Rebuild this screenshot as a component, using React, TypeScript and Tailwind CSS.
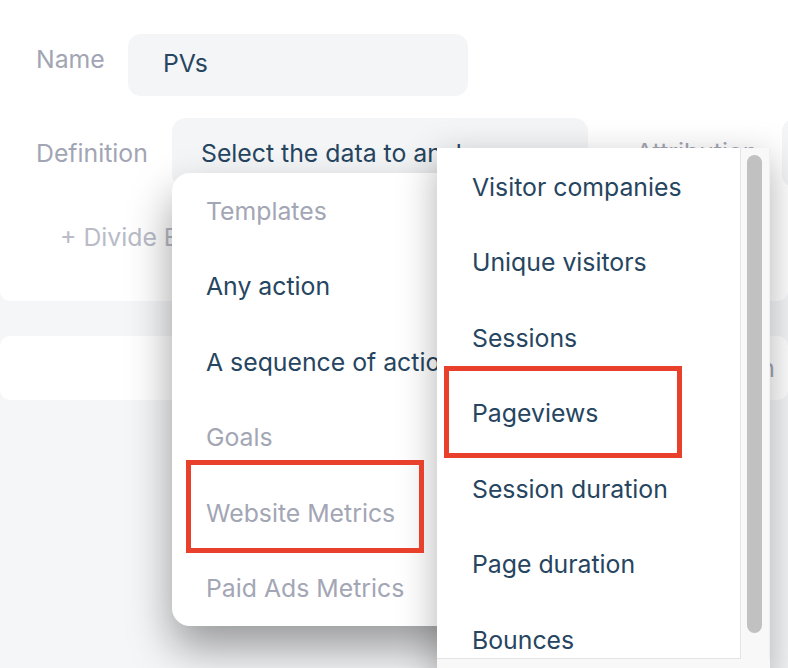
import React from 'react';
import { ChevronDown } from 'lucide-react';

const leftItems = [
  { label: 'Templates', muted: true },
  { label: 'Any action', muted: false },
  { label: 'A sequence of actions', muted: false },
  { label: 'Goals', muted: true },
  { label: 'Website Metrics', muted: true },
  { label: 'Paid Ads Metrics', muted: true },
];

const metricItems = [
  'Visitor companies',
  'Unique visitors',
  'Sessions',
  'Pageviews',
  'Session duration',
  'Page duration',
  'Bounces',
];

const App: React.FC = () => {
  return (
    <div
      className="relative w-[788px] h-[668px] overflow-hidden bg-[#f5f6f8] text-[24.8px] leading-[32px]"
      style={{ fontFamily: 'Inter, "Noto Sans", sans-serif' }}
    >
      {/* Metric form card */}
      <div className="w-[788px] h-[301px] bg-white rounded-b-[10px] pl-[36px] overflow-hidden">
        <div className="flex items-start pt-[34px]">
          <div className="w-[92px] shrink-0 pt-[9px] text-[#a2a5b4]">Name</div>
          <div className="w-[340px] h-[62px] shrink-0 rounded-[13px] bg-[#f4f5f7] pl-[35px] pt-[13px] text-[#264560]">
            PVs
          </div>
        </div>

        <div className="flex items-start mt-[22px]">
          <div className="w-[136px] shrink-0 pt-[19px] text-[#a2a5b4]">Definition</div>
          <div className="w-[416px] h-[70px] shrink-0 rounded-[14px] bg-[#f4f5f7] pl-[29px] pt-[19px] flex items-start gap-[14px] text-[#264560] whitespace-nowrap">
            <span>Select the data to analyze</span>
            <ChevronDown className="mt-[5px] w-[22px] h-[22px] text-[#a2a5b4]" strokeWidth={2} />
          </div>
          <div className="w-[194px] shrink-0 pl-[48px] pt-[18px] text-[#a2a5b4]">Attribution</div>
          <div className="w-[200px] h-[70px] shrink-0 rounded-[14px] bg-[#f4f5f7]" />
        </div>

        <div className="mt-[33px] pl-[24px] text-[#b9bcc7]">+ Divide By</div>
      </div>

      {/* Second card */}
      <div className="mt-[35px] w-[788px] h-[64px] bg-white rounded-[10px] flex items-center justify-end pr-[13px] text-[#a2a5b4]">
        Hide section
      </div>

      {/* Data source menu */}
      <div className="absolute left-[172px] top-[173px] w-[300px] h-[453px] rounded-[18px] bg-white shadow-[0_22px_44px_rgba(0,0,0,0.38)] overflow-hidden">
        {leftItems.map((item) => (
          <div
            key={item.label}
            className={`h-[75.5px] flex items-center pl-[34px] whitespace-nowrap ${
              item.muted ? 'text-[#a3a6b5]' : 'text-[#264560]'
            }`}
          >
            {item.label}
          </div>
        ))}
      </div>

      {/* Website metrics submenu */}
      <div className="absolute left-[437px] top-[148px] w-[333px] h-[530px] bg-[#f8f8f8] shadow-[0_12px_36px_rgba(0,0,0,0.3)] flex flex-col">
        <div className="flex">
          <div className="w-[304px] h-[511px] bg-white border-r border-b border-[#e4e4e4] pt-[1px] overflow-hidden">
            {metricItems.map((m) => (
              <div key={m} className="h-[75.5px] flex items-center pl-[35px] text-[#264560] whitespace-nowrap">
                {m}
              </div>
            ))}
          </div>
          <div className="flex-1 h-[511px] bg-[#f8f8f8] border-r border-[#efefef]">
            <div className="ml-[6px] mt-[7px] w-[15px] h-[478px] rounded-full bg-[#c1c1c1]" />
          </div>
        </div>
      </div>

      {/* Annotation boxes */}
      <div className="absolute left-[186px] top-[460px] w-[238px] h-[93px] border-[5px] border-[#e8402b]" />
      <div className="absolute left-[444px] top-[366px] w-[238px] h-[92px] border-[5px] border-[#e8402b]" />
    </div>
  );
};

export default App;
